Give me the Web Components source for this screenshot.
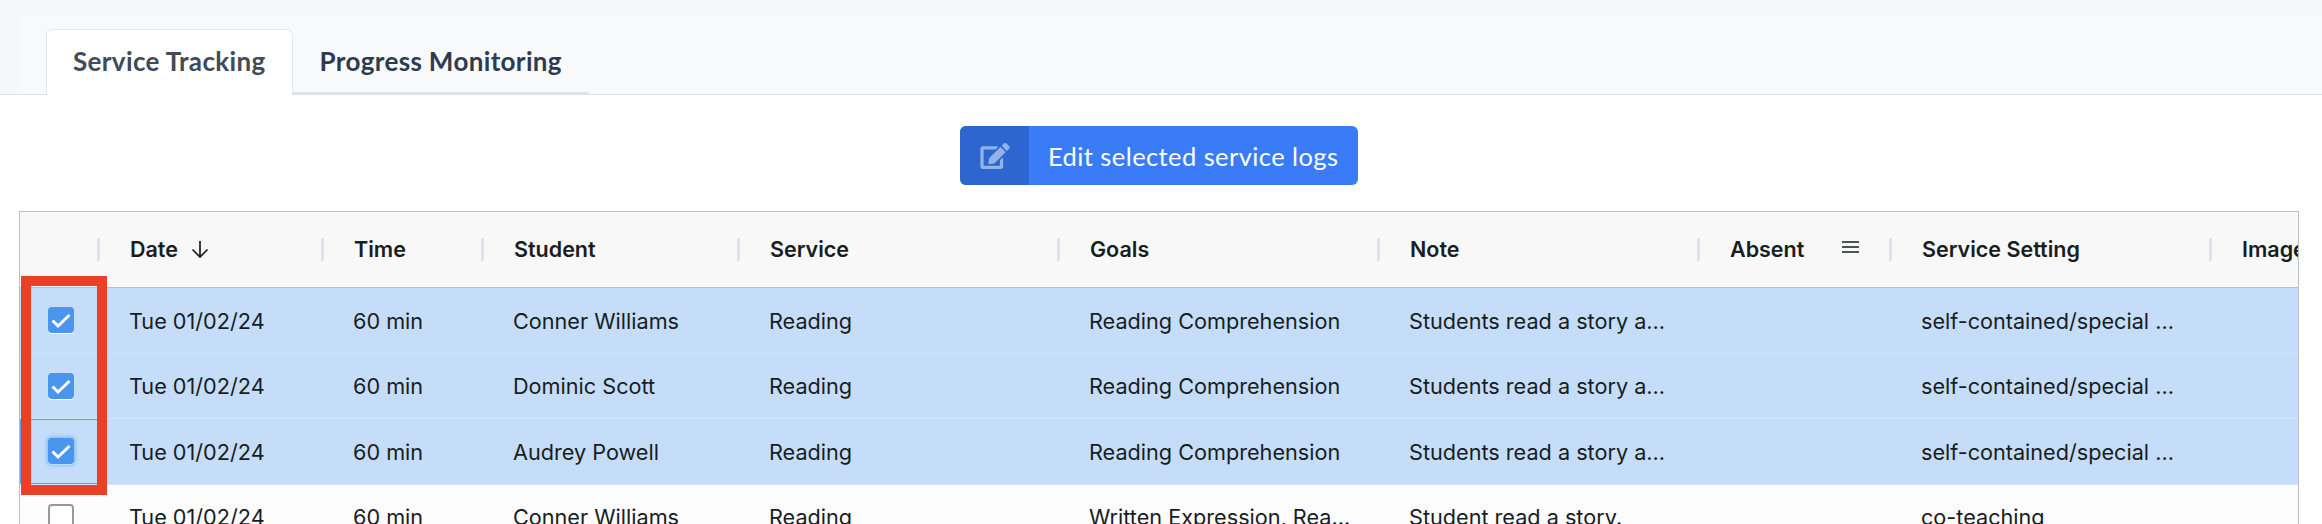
<!DOCTYPE html>
<html lang="en">
<head>
<meta charset="utf-8">
<title>Service Tracking</title>
<style>
  html, body { margin: 0; padding: 0; background: #fff; }
  body { width: 2322px; height: 524px; overflow: hidden; font-family: "Inter", "Liberation Sans", sans-serif; }
</style>
</head>
<body>
<log-page>
  <tab-bar slot="tabs">
    <tab-item active>Service Tracking</tab-item>
    <tab-item>Progress Monitoring</tab-item>
  </tab-bar>
  <edit-button slot="action">Edit selected service logs</edit-button>
  <log-grid slot="grid"></log-grid>
</log-page>

<script>
// page frame: tabs on top, centered action, then the grid
class LogPage extends HTMLElement {
  constructor() {
    super();
    this.attachShadow({ mode: "open" });
    this.shadowRoot.innerHTML = `
<style>
:host { display: block; position: relative; height: 524px; overflow: hidden; }
.action { display: flex; justify-content: center; padding: 31px 4px 26px 0; }
.grid { padding: 0 0 0 19px; }
.mark {
  position: absolute; left: 21px; top: 276px; width: 66px; height: 199px;
  border: 10px solid #ea4025; pointer-events: none;
}
</style>
<slot name="tabs"></slot>
<div class="action"><slot name="action"></slot></div>
<div class="grid"><slot name="grid"></slot></div>
<div class="mark"></div>`;
  }
}

class TabBar extends HTMLElement {
  constructor() {
    super();
    this.attachShadow({ mode: "open" });
    this.shadowRoot.innerHTML = `
<style>
:host {
  display: flex; height: 95px; padding: 16px 0 0 19px; box-sizing: border-box;
  background: #f6f7f8; border-bottom: 1px solid #dcdfe3;
}
.inner {
  flex: 1; display: flex; align-items: flex-end; padding: 13px 0 0 27px; background: #f8f9fb;
  box-sizing: border-box;
}
.list { display: flex; border-bottom: 2px solid #dfe3e8; height: 65px; box-sizing: border-box; }
</style>
<div class="inner"><div class="list"><slot></slot></div></div>`;
  }
}

class TabItem extends HTMLElement {
  constructor() {
    super();
    this.attachShadow({ mode: "open" });
    this.shadowRoot.innerHTML = `
<style>
:host {
  display: block; height: 64px; margin-bottom: -2px; box-sizing: border-box;
  padding: 0 26px; white-space: nowrap; letter-spacing: .35px;
  font: 700 26px/62px "Lato", "Liberation Sans", sans-serif; color: #2d3b50;
  border: 1px solid transparent; border-bottom: 0;
}
:host([active]) {
  height: 66px; color: #414a57; background: #fff; border-color: #e2e5ea;
  border-radius: 6px 6px 0 0; margin-bottom: -3px; position: relative;
}
</style>
<slot></slot>`;
  }
}

class EditButton extends HTMLElement {
  constructor() {
    super();
    this.attachShadow({ mode: "open" });
    this.shadowRoot.innerHTML = `
<style>
:host {
  display: inline-flex; height: 59px; width: 398px; background: #3a7cf7; color: #fff;
  border-radius: 6px; overflow: hidden; font: 400 25.5px "Lato", "Liberation Sans", sans-serif;
  letter-spacing: .42px;
}
.icon { width: 69px; display: flex; align-items: center; justify-content: center; background: #2e66d0; }
.text { flex: 1; display: flex; align-items: center; padding-left: 19px; white-space: nowrap; }
svg { display: block; width: 30px; height: 26px; fill: #92b2e8; }
</style>
<div class="icon">
  <svg viewBox="0 0 576 512"><path d="M402.6 83.2l90.2 90.2c3.8 3.8 3.8 10 0 13.8L274.4 405.6l-92.8 10.3c-12.4 1.4-22.9-9.1-21.5-21.5l10.3-92.8L388.8 83.2c3.8-3.8 10-3.8 13.8 0zm162-22.9l-48.8-48.8c-15.2-15.2-39.9-15.2-55.2 0l-35.4 35.4c-3.8 3.8-3.8 10 0 13.8l90.2 90.2c3.8 3.8 10 3.8 13.8 0l35.4-35.4c15.2-15.3 15.2-40 0-55.2zM384 346.2V448H64V128h229.8c3.2 0 6.2-1.3 8.5-3.5l40-40c7.6-7.6 2.2-20.5-8.5-20.5H48C21.5 64 0 85.5 0 112v352c0 26.5 21.5 48 48 48h352c26.5 0 48-21.5 48-48V306.2c0-10.7-12.9-16-20.5-8.5l-40 40c-2.2 2.3-3.5 5.3-3.5 8.5z"/></svg>
</div>
<div class="text"><slot></slot></div>`;
  }
}

const COLUMNS = "80px 224px 160px 256px 320px 320px 320px 192px 320px 320px";

const ROWS = [
  ["Tue 01/02/24", "60 min", "Conner Williams", "Reading", "Reading Comprehension", "Students read a story a...", "", "self-contained/special ..."],
  ["Tue 01/02/24", "60 min", "Dominic Scott", "Reading", "Reading Comprehension", "Students read a story a...", "", "self-contained/special ..."],
  ["Tue 01/02/24", "60 min", "Audrey Powell", "Reading", "Reading Comprehension", "Students read a story a...", "", "self-contained/special ..."],
  ["Tue 01/02/24", "60 min", "Conner Williams", "Reading", "Written Expression, Rea...", "Student read a story.", "", "co-teaching"],
];

class LogGrid extends HTMLElement {
  constructor() {
    super();
    this.attachShadow({ mode: "open" });
    const heads = ["", "Date", "Time", "Student", "Service", "Goals", "Note", "Absent", "Service Setting", "Image"];
    const headHtml = heads.map((h, i) => {
      let extra = "";
      if (h === "Date") {
        extra = `<svg class="sort" viewBox="0 0 18 18"><path d="M9 1V17M1.5 9.5L9 17l7.5-7.5" fill="none" stroke="#181d1f" stroke-width="1.7"/></svg>`;
      }
      if (h === "Absent") {
        extra = `<svg class="menu" viewBox="0 0 17 12"><path d="M0 1h17M0 6h17M0 11h17" fill="none" stroke="#181d1f" stroke-width="1.5"/></svg>`;
      }
      return `<div class="hcell ${i === 9 ? "last" : ""}"><span>${h}</span>${extra}</div>`;
    }).join("");
    const rowHtml = ROWS.map((r, i) => `<log-row ${i < 3 ? "selected" : ""} ${i === 2 ? "focused" : ""} data-cells="${r.join("|")}"></log-row>`).join("");
    this.shadowRoot.innerHTML = `
<style>
:host {
  display: block; width: 2280px; height: 340px; overflow: hidden; box-sizing: border-box;
  border: 1px solid #babfc7; border-bottom: 0; background: #fff; color: #181d1f;
}
.head {
  display: grid; grid-template-columns: ${COLUMNS}; height: 76px; background: #f8f8f8;
  border-bottom: 1px solid #babfc7; width: max-content; box-sizing: border-box;
}
.hcell {
  position: relative; display: flex; align-items: center; padding: 0 0 1px 30px; gap: 13px;
  font: 600 21.5px "Inter", "Liberation Sans", sans-serif; white-space: nowrap; min-width: 0;
}
.hcell::after {
  content: ""; position: absolute; right: 0; top: 26px; width: 3px; height: 23px; background: #dde2eb;
}
.hcell.last::after { display: none; }
.sort { width: 18px; height: 18px; }
.menu { width: 17px; height: 12px; margin-left: 25px; margin-top: -5px; }
</style>
<div class="head">${headHtml}</div>
${rowHtml}`;
  }
}

class LogRow extends HTMLElement {
  connectedCallback() {
    if (this.shadowRoot) return;
    this.attachShadow({ mode: "open" });
    const cells = this.dataset.cells.split("|");
    const checked = this.hasAttribute("selected");
    this.shadowRoot.innerHTML = `
<style>
:host {
  display: grid; grid-template-columns: ${COLUMNS}; height: 65.5px; width: max-content;
  background: #fcfcfc; border-bottom: 1px solid #dde2eb; box-sizing: border-box;
}
:host([selected]) { background: #c5ddf8; border-bottom-color: #d0e4fa; }
.cell {
  display: flex; align-items: center; padding: 1px 0 0 29px; white-space: nowrap; overflow: hidden;
  font: 400 21.65px "Inter", "Liberation Sans", sans-serif;
}
.box { justify-content: center; padding: 0 0 0 2px; box-sizing: border-box; }
:host([focused]) .box { box-shadow: inset 2px 0 0 #5a9fee, inset 0 1px 0 #5a9fee, inset 0 -1px 0 #5a9fee; }
.check {
  width: 26px; height: 26px; box-sizing: border-box; border-radius: 4px; border: 2px solid #999;
  background: #fff; display: block;
}
.check.on { background: #4a96ee; border: 0; box-shadow: 0 1px 0 #fff; }
:host([focused]) .check.on { box-shadow: 0 0 3px 2px rgba(33,150,243,.35), 0 1px 0 #fff; }
.check svg { display: block; width: 26px; height: 26px; }
</style>
<div class="cell box"><span class="check ${checked ? "on" : ""}">${checked ? `<svg viewBox="0 0 26 26"><path d="M4.5 13.5l5.5 5.5 11.5-11" fill="none" stroke="#fff" stroke-width="3"/></svg>` : ""}</span></div>
${cells.map(c => `<div class="cell">${c}</div>`).join("")}
<div class="cell"></div>`;
  }
}

customElements.define("log-page", LogPage);
customElements.define("tab-bar", TabBar);
customElements.define("tab-item", TabItem);
customElements.define("edit-button", EditButton);
customElements.define("log-grid", LogGrid);
customElements.define("log-row", LogRow);
</script>
</body>
</html>
